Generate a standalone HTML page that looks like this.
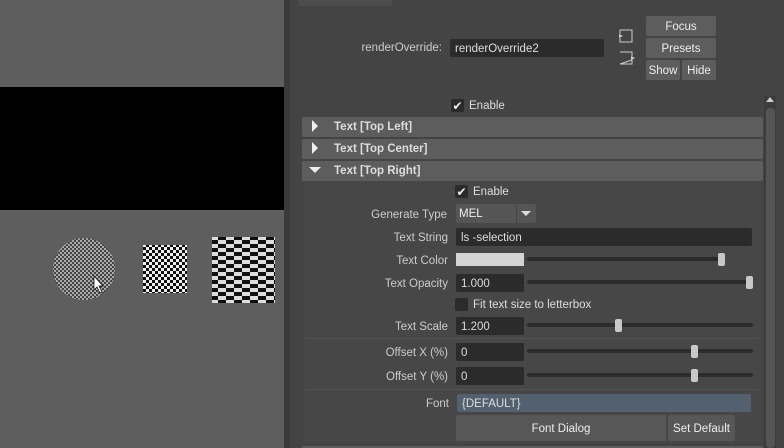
<!DOCTYPE html><html><head><style>
*{margin:0;padding:0;box-sizing:border-box}
body{width:784px;height:448px;overflow:hidden;background:#444;font-family:"Liberation Sans",sans-serif;font-size:11.5px;color:#ddd;position:relative}
.a{position:absolute}
.t{position:absolute;margin-top:1px}
.lbl{position:absolute;text-align:right;color:#ccc;margin-top:1px}
.fld{position:absolute;background:#2b2b2b;color:#ddd;padding-left:5px;padding-top:1px;border-radius:2px}
.btn{position:absolute;background:#5d5d5d;color:#eee;text-align:center;border-radius:2px;padding-top:1px}
.hdr{position:absolute;left:302px;width:461px;height:20px;background:#5d5d5d;border-radius:2px;font-weight:bold;color:#ddd;line-height:21px;padding-left:32px}
.trk{position:absolute;height:4px;background:#2b2b2b;border-radius:2px}
.hnd{position:absolute;width:7px;height:13px;background:#c8c8c8;border-radius:2px}
.cb{position:absolute;width:13px;height:13px;background:#2b2b2b;border-radius:2px;color:#eee;font-size:12px;line-height:14px;text-align:center}
</style></head><body>
<div class="a" style="left:0;top:0;width:284px;height:448px;background:#5e5e5e"></div>
<div class="a" style="left:0;top:87px;width:284px;height:123px;background:#000"></div>
<div class="a" style="left:284px;top:0;width:6px;height:448px;background:#3a3a3a"></div>
<svg class="a" style="left:50px;top:232px" width="240" height="80">
<defs><pattern id="p" width="4" height="4" patternUnits="userSpaceOnUse"><rect width="4" height="4" fill="#aaa"/><rect width="2" height="2" fill="#444"/><rect x="2" y="2" width="2" height="2" fill="#444"/></pattern>
<pattern id="q" width="6" height="6" patternUnits="userSpaceOnUse"><rect width="6" height="6" fill="#eee"/><rect width="3" height="3" fill="#111"/><rect x="3" y="3" width="3" height="3" fill="#111"/></pattern>
<pattern id="c" width="16" height="8" patternUnits="userSpaceOnUse"><rect width="16" height="8" fill="#ddd"/><rect width="8" height="4" fill="#111"/><rect x="8" y="4" width="8" height="4" fill="#111"/></pattern></defs>
<circle cx="34" cy="37" r="31" fill="url(#p)"/>
<rect x="93" y="13" width="44" height="48" fill="url(#q)"/>
<rect x="162" y="5" width="63" height="66" fill="url(#c)"/>
<path d="M44 44 L44 58 L47 55 L50 61 L52 60 L49 54 L53 54 Z" fill="#fff" stroke="#000" stroke-width=".7"/>
</svg>
<div class="a" style="left:298px;top:0;width:94px;height:6px;background:#4d4d4d"></div>
<div class="lbl" style="left:330px;width:112px;top:41px">renderOverride:</div>
<div class="fld" style="left:450px;top:39px;width:154px;height:18px;line-height:18px">renderOverride2</div>
<svg class="a" style="left:617px;top:28px" width="20" height="40"><path d="M3 2H15V14H3V10M3 6V2" fill="none" stroke="#ccc"/><path d="M2 6L6 8L2 10Z" fill="#ccc"/><path d="M3 24H15V28M15 32V36H3Z" fill="none" stroke="#ccc"/><path d="M14 28L18 30L14 32Z" fill="#ccc"/></svg>
<div class="btn" style="left:646px;top:16px;width:70px;height:20px;line-height:20px">Focus</div>
<div class="btn" style="left:646px;top:38px;width:70px;height:20px;line-height:20px">Presets</div>
<div class="btn" style="left:646px;top:60px;width:34px;height:20px;line-height:20px">Show</div>
<div class="btn" style="left:682px;top:60px;width:34px;height:20px;line-height:20px">Hide</div>
<div class="cb" style="left:451px;top:99px">✔</div><div class="t" style="left:469px;top:99px">Enable</div>
<div class="a" style="left:764px;top:96px;width:12px;height:352px;background:#3c3c3c"></div>
<div class="a" style="left:766px;top:108px;width:9px;height:340px;background:#555;border-radius:4px"></div>
<div class="a" style="left:766px;top:97px;border-bottom:5px solid #ccc;border-left:4px solid transparent;border-right:4px solid transparent"></div>
<div class="hdr" style="top:117px">Text [Top Left]</div>
<div class="hdr" style="top:139px">Text [Top Center]</div>
<div class="hdr" style="top:161px">Text [Top Right]</div>
<div class="a" style="left:312px;top:120px;width:0;height:0;border-left:6px solid #eee;border-top:6px solid transparent;border-bottom:6px solid transparent"></div>
<div class="a" style="left:312px;top:142px;width:0;height:0;border-left:6px solid #eee;border-top:6px solid transparent;border-bottom:6px solid transparent"></div>
<div class="a" style="left:309px;top:167px;width:0;height:0;border-top:6px solid #eee;border-left:6px solid transparent;border-right:6px solid transparent"></div>
<div class="a" style="left:304px;top:181px;width:457px;height:262px;background:#474747"></div>
<div class="cb" style="left:455px;top:185px">✔</div><div class="t" style="left:473px;top:185px">Enable</div>
<div class="lbl" style="left:300px;width:147px;top:208px">Generate Type</div>
<div class="btn" style="left:456px;top:204px;width:80px;height:19px;line-height:19px;text-align:left;padding-left:3px;background:#555">MEL</div>
<div class="a" style="left:516px;top:204px;width:1px;height:19px;background:#444"></div>
<div class="a" style="left:521px;top:211px;border-top:5px solid #ddd;border-left:5px solid transparent;border-right:5px solid transparent"></div>
<div class="lbl" style="left:300px;width:148px;top:231px">Text String</div>
<div class="fld" style="left:456px;top:228px;width:296px;height:18px;line-height:18px">ls -selection</div>
<div class="lbl" style="left:300px;width:148px;top:254px">Text Color</div>
<div class="a" style="left:456px;top:253px;width:68px;height:13px;background:#d4d4d4"></div>
<div class="trk" style="left:527px;top:257px;width:197px"></div><div class="hnd" style="left:718px;top:253px"></div>
<div class="lbl" style="left:300px;width:148px;top:277px">Text Opacity</div>
<div class="fld" style="left:456px;top:274px;width:68px;height:18px;line-height:18px">1.000</div>
<div class="trk" style="left:527px;top:280px;width:226px"></div><div class="hnd" style="left:746px;top:276px"></div>
<div class="cb" style="left:455px;top:298px"></div><div class="t" style="left:473px;top:298px">Fit text size to letterbox</div>
<div class="lbl" style="left:300px;width:148px;top:320px">Text Scale</div>
<div class="fld" style="left:456px;top:317px;width:68px;height:18px;line-height:18px">1.200</div>
<div class="trk" style="left:527px;top:323px;width:226px"></div><div class="hnd" style="left:615px;top:319px"></div>
<div class="a" style="left:306px;top:338px;width:452px;height:1px;background:#525252"></div>
<div class="lbl" style="left:300px;width:148px;top:346px">Offset X (%)</div>
<div class="fld" style="left:456px;top:343px;width:68px;height:18px;line-height:18px">0</div>
<div class="trk" style="left:527px;top:349px;width:226px"></div><div class="hnd" style="left:691px;top:345px"></div>
<div class="lbl" style="left:300px;width:148px;top:370px">Offset Y (%)</div>
<div class="fld" style="left:456px;top:367px;width:68px;height:18px;line-height:18px">0</div>
<div class="trk" style="left:527px;top:373px;width:226px"></div><div class="hnd" style="left:691px;top:369px"></div>
<div class="a" style="left:306px;top:389px;width:452px;height:1px;background:#525252"></div>
<div class="lbl" style="left:300px;width:149px;top:397px">Font</div>
<div class="fld" style="left:457px;top:394px;width:294px;height:18px;line-height:18px;background:#536070">{DEFAULT}</div>
<div class="btn" style="left:456px;top:415px;width:210px;height:26px;line-height:26px;background:#575757">Font Dialog</div>
<div class="btn" style="left:668px;top:415px;width:67px;height:26px;line-height:26px;background:#575757">Set Default</div>
<div class="a" style="left:302px;top:446px;width:461px;height:2px;background:#5d5d5d"></div>
</body></html>
